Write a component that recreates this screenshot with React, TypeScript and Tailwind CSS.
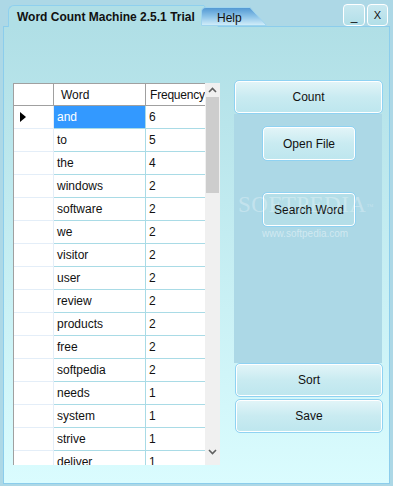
import React from "react";

const rows: [string, string][] = [
  ["and", "6"],
  ["to", "5"],
  ["the", "4"],
  ["windows", "2"],
  ["software", "2"],
  ["we", "2"],
  ["visitor", "2"],
  ["user", "2"],
  ["review", "2"],
  ["products", "2"],
  ["free", "2"],
  ["softpedia", "2"],
  ["needs", "1"],
  ["system", "1"],
  ["strive", "1"],
  ["deliver", "1"],
];

function Btn({ label, className }: { label: string; className: string }) {
  return (
    <div
      className={
        "flex items-center justify-center rounded-[5px] border border-[#8fd2f2] shadow-[inset_0_0_0_1px_#ffffff] bg-gradient-to-b from-[#e3f5f8] via-[#c9ebf1] to-[#bde6ee] text-[12px] text-[#111]" +
        " " +
        className
      }
    >
      {label}
    </div>
  );
}

export default function App() {
  return (
    <div
      className="relative w-[393px] h-[486px] overflow-hidden bg-[#add8e6]"
      style={{ fontFamily: '"Liberation Sans", Arial, sans-serif' }}
    >
      {/* top bar */}
      <div className="relative h-[26px] flex items-end">
        <div className="ml-[8px] mt-[5px] h-[22px] w-[196px] rounded-tl-[6px] border-t border-l border-[#8fd0ee] bg-[#b0dfe6] flex items-center pl-[8px] text-[12px] font-bold text-[#111] z-10 translate-y-[1px]">
          Word Count Machine 2.5.1 Trial
        </div>
        <svg className="absolute left-[200px] top-[4px] z-10" width="20" height="24" viewBox="0 0 20 24">
          <path d="M0 1.5 L4 1.5 L18 23 L0 23 Z" fill="#b0dfe6" />
          <path d="M0 1.5 L4 1.5 L18 22" stroke="#8fd0ee" fill="none" strokeWidth="1" />
        </svg>
        <div className="absolute left-[201px] top-[7px] z-20 w-[66px] h-[19px]">
          <svg width="66" height="19" viewBox="0 0 66 19" className="absolute inset-0">
            <defs>
              <linearGradient id="hg" x1="0" y1="0" x2="0" y2="1">
                <stop offset="0" stopColor="#4f96d2" />
                <stop offset="0.5" stopColor="#8cc3e8" />
                <stop offset="1" stopColor="#d4effa" />
              </linearGradient>
            </defs>
            <path d="M0.5 18.5 L0.5 5 Q0.5 0.5 5 0.5 L49 0.5 L65.5 18.5 Z" fill="url(#hg)" stroke="#9fd4ee" />
          </svg>
          <span className="absolute left-[16px] top-[2px] text-[12px] text-[#111]">Help</span>
        </div>
        <div className="flex-1" />
        <div className="absolute left-[343px] top-[4px] flex gap-[2px] z-20">
          <div className="w-[22px] h-[22px] rounded-[4px] border border-white bg-gradient-to-b from-[#c8e8f0] to-[#b2dfe8] flex items-center justify-center text-[12px] text-[#111] pt-[2px]">
            _
          </div>
          <div className="w-[21px] h-[22px] rounded-[4px] border border-white bg-gradient-to-b from-[#c8e8f0] to-[#b2dfe8] flex items-center justify-center text-[11px] text-[#111]">
            X
          </div>
        </div>
      </div>

      {/* body */}
      <div className="relative ml-[3px] w-[387px] h-[458px] border border-[#8ccdec] bg-gradient-to-b from-[#b0dfe6] to-[#dafcfe] flex pl-[9px]">
        {/* grid */}
        <div className="mt-[56px] w-[207px] h-[382px] flex overflow-hidden border-l border-[#a0a0a0] bg-white">
          <div className="w-[192px] flex flex-col">
            <div className="flex h-[23px] shrink-0 border-t border-b border-[#a0a0a0] bg-white text-[12px] text-[#111]">
              <div className="w-[40px] border-r border-[#a0a0a0]" />
              <div className="w-[92px] border-r border-[#a0a0a0] pl-[7px] flex items-center">Word</div>
              <div className="flex-1 pl-[4px] flex items-center tracking-[-0.2px]">Frequency</div>
            </div>
            {rows.map(([w, f], i) => (
              <div key={w} className="flex h-[23px] shrink-0 text-[12px] text-[#111]">
                <div className="w-[40px] border-r border-b border-[#e4eef8] flex items-center pl-[6px]">
                  {i === 0 && (
                    <svg width="6" height="10" viewBox="0 0 6 10">
                      <path d="M0 0 L6 5 L0 10 Z" fill="#000" />
                    </svg>
                  )}
                </div>
                <div
                  className={
                    "w-[92px] border-r border-b border-[#a9dbe6] pl-[3px] flex items-center " +
                    (i === 0 ? "bg-[#3399ff] text-white" : "")
                  }
                >
                  {w}
                </div>
                <div className="flex-1 border-b border-[#a9dbe6] pl-[3px] flex items-center">{f}</div>
              </div>
            ))}
          </div>
          <div className="w-[15px] bg-[#f0f0f0] flex flex-col items-center">
            <div className="h-[14px] flex items-center justify-center">
              <svg width="9" height="6" viewBox="0 0 9 6">
                <path d="M1 5 L4.5 1.5 L8 5" stroke="#606060" strokeWidth="1.6" fill="none" />
              </svg>
            </div>
            <div className="w-[13px] h-[96px] bg-[#cdcdcd]" />
            <div className="flex-1" />
            <div className="h-[20px] flex items-start justify-center pt-[4px]">
              <svg width="9" height="6" viewBox="0 0 9 6">
                <path d="M1 1 L4.5 4.5 L8 1" stroke="#606060" strokeWidth="1.6" fill="none" />
              </svg>
            </div>
          </div>
        </div>

        {/* right column */}
        <div className="ml-[14px] mt-[53px] w-[149px] flex flex-col">
          <Btn label="Count" className="h-[34px] w-[149px]" />
          <div className="w-[148px] h-[249px] bg-[#acd8e6] flex flex-col items-start pl-[28px] pt-[12px]">
            <Btn label="Open File" className="w-[94px] h-[35px]" />
            <Btn label="Search Word" className="w-[94px] h-[35px] mt-[31px] bg-none bg-[#b4dee8]" />
          </div>
          <Btn label="Sort" className="h-[34px] w-[148px] ml-[1px]" />
          <Btn label="Save" className="h-[34px] w-[148px] ml-[1px] mt-[2px]" />
        </div>
      </div>

      {/* watermark overlay */}
      <div className="pointer-events-none absolute left-[238px] top-[193px] z-30 flex flex-col items-start">
        <span
          className="text-[23px] tracking-[0.5px] text-white/30 leading-none"
          style={{ fontFamily: '"Liberation Serif", serif' }}
        >
          SOFTPEDIA<sup className="text-[7px]">™</sup>
        </span>
        <span className="text-[10px] text-white/45 leading-none mt-[13px] ml-[24px]">www.softpedia.com</span>
      </div>
    </div>
  );
}
